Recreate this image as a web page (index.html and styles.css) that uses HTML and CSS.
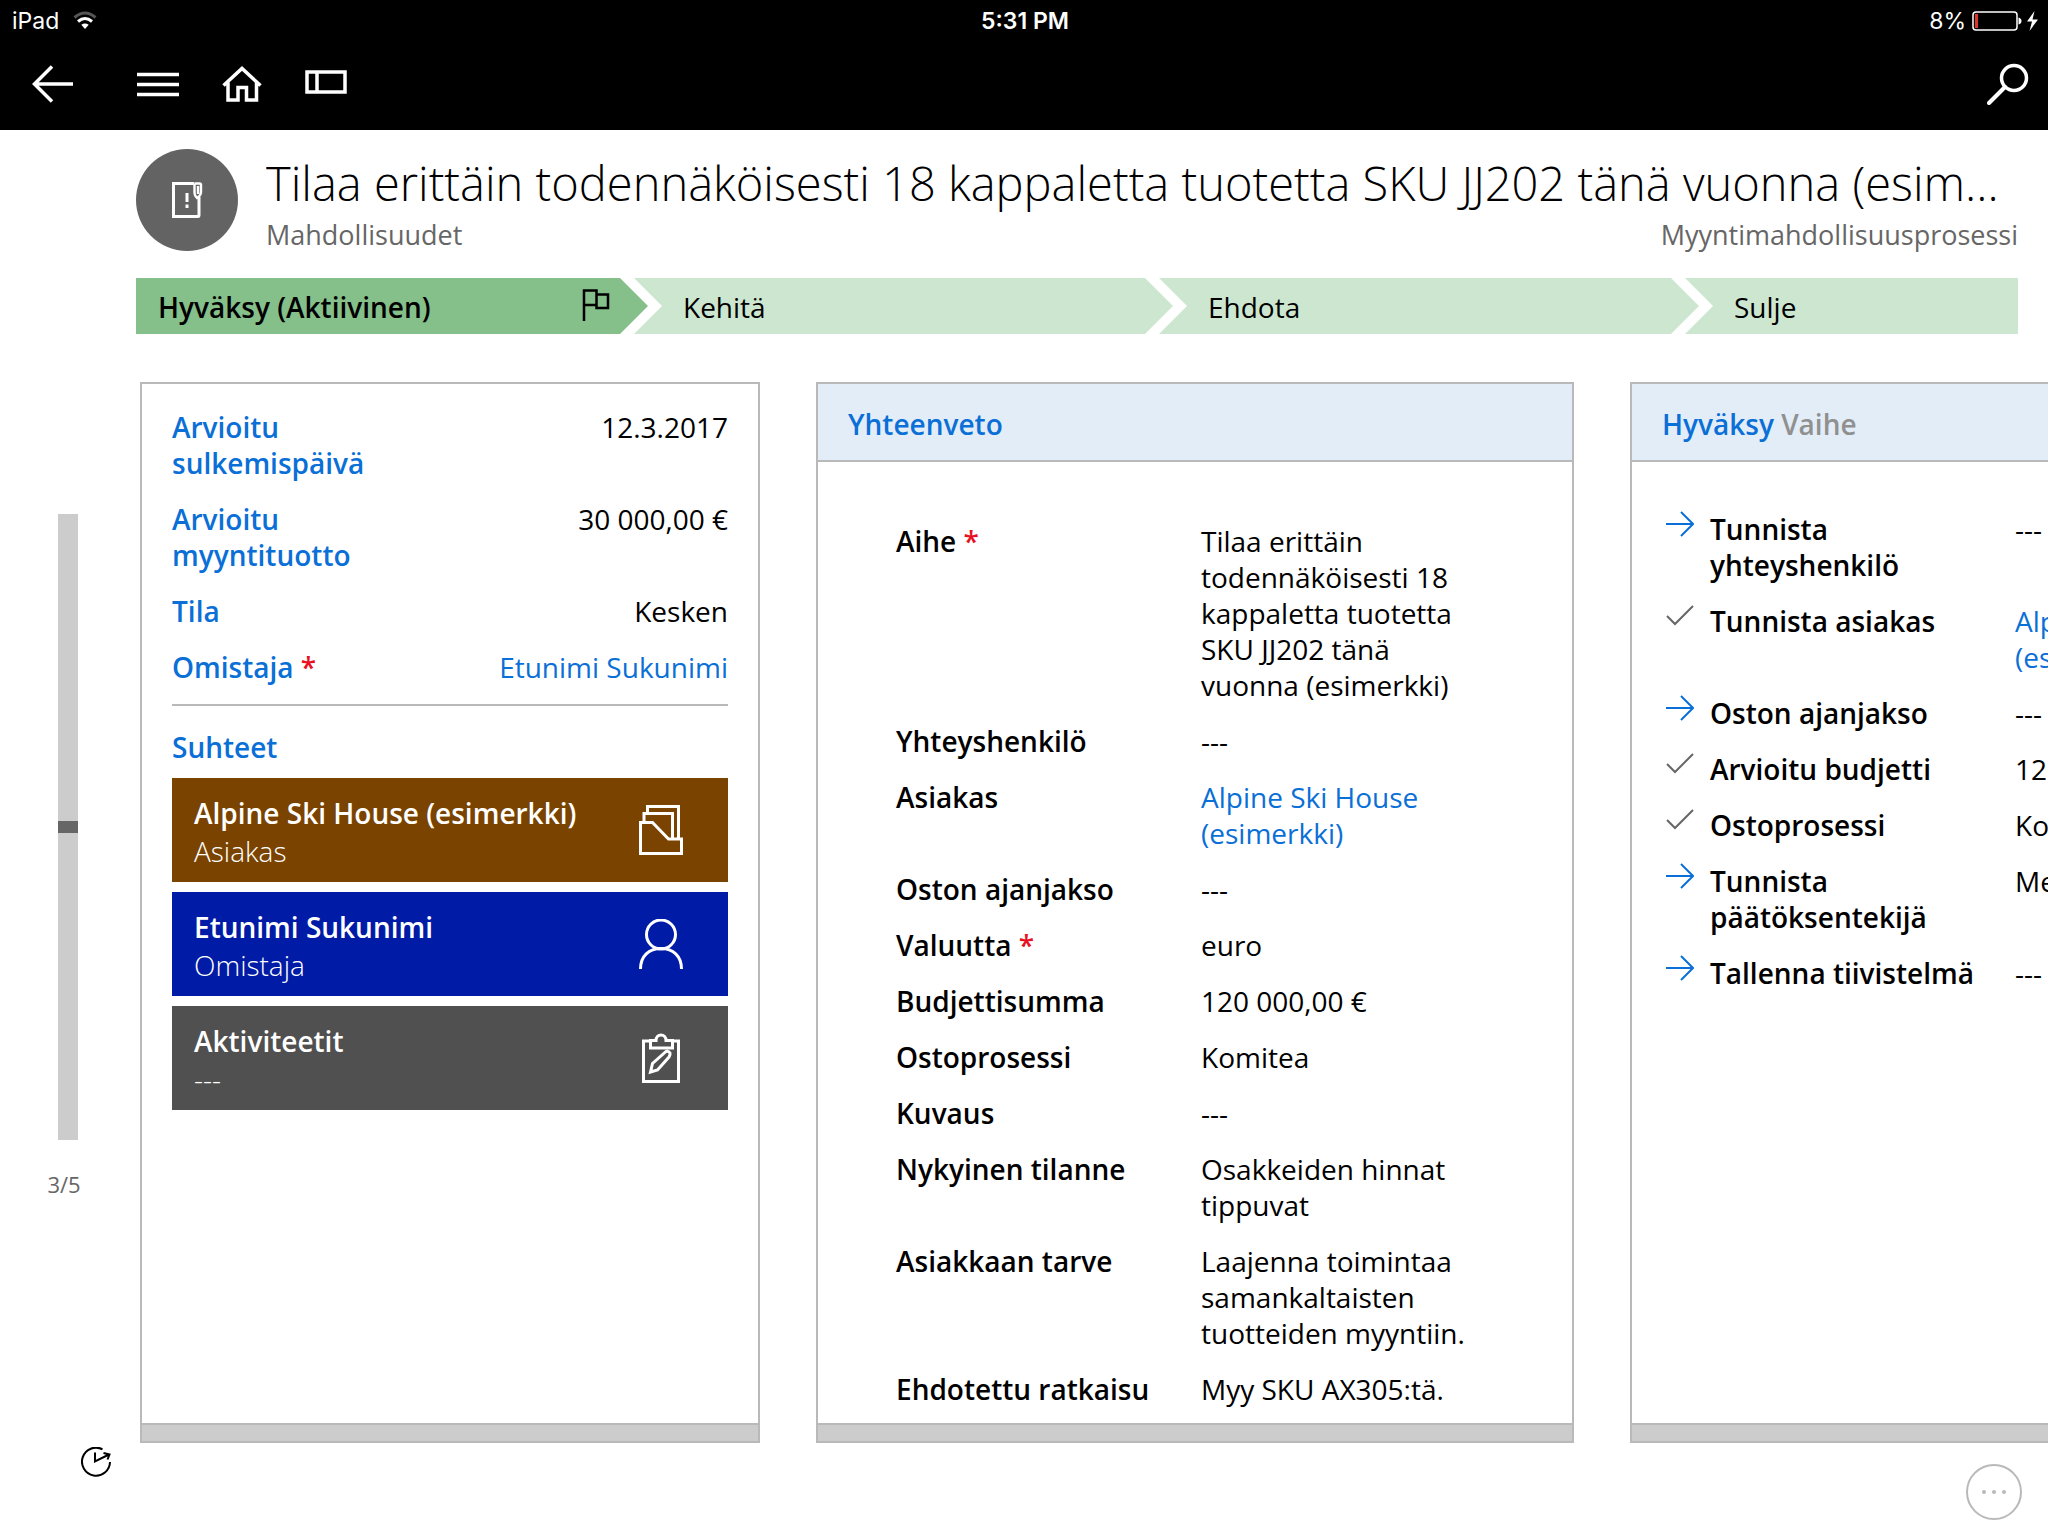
FILE: index.html
```html
<!DOCTYPE html>
<html lang="fi">
<head>
<meta charset="utf-8">
<meta name="viewport" content="width=device-width, initial-scale=1">
<title>Mahdollisuudet</title>
<link rel="stylesheet" href="styles.css">
</head>
<body>
<header class="top">
  <div class="status">
    <div class="status-left">
      <span>iPad</span>
      <svg width="24" height="20" viewBox="0 0 24 20" fill="none" stroke="#fff" aria-hidden="true">
        <path d="M1.500 6.500 Q12 -2.500 22.500 6.500" stroke="#555" stroke-width="3"/>
        <path d="M5 10.500 Q12 4.500 19 10.500" stroke-width="3"/>
        <path d="M12 18 L8.300 13.800 Q12 11 15.700 13.800 Z" fill="#fff" stroke="none"/>
      </svg>
    </div>
    <time class="clock">5:31 PM</time>
    <div class="status-right">
      <span>8%</span>
      <svg width="66" height="20" viewBox="0 0 66 20" aria-hidden="true">
        <rect x="1" y="1" width="44" height="18" rx="3" fill="none" stroke="#fff" stroke-width="1.500"/>
        <path d="M3 3 h3 v14 h-3 z" fill="#e0342b"/>
        <path d="M46.500 6.500 q3 1 3 3.500 t-3 3.500 z" fill="#fff"/>
        <path d="M62.500 0 L55 10.500 H60 L57.500 20 L66 8.500 H60.500 Z" fill="#fff"/>
      </svg>
    </div>
  </div>
  <nav class="toolbar">
    <button class="tool back" aria-label="Takaisin">
      <svg width="42" height="38" viewBox="0 0 42 38"><path d="M20 1.500 L2.500 19 L20 36.500 M2.500 19 H41"/></svg>
    </button>
    <button class="tool" aria-label="Valikko">
      <svg width="42" height="38" viewBox="0 0 42 38"><path d="M0 9.500 H42 M0 19.500 H42 M0 29.500 H42"/></svg>
    </button>
    <button class="tool" aria-label="Aloitus">
      <svg width="42" height="38" viewBox="0 0 42 38"><path d="M2.500 20.500 L21 3.500 L39.500 20.500 M7 17.500 V35 H17 V22.500 H25.500 V35 H35.500 V17.500"/></svg>
    </button>
    <button class="tool" aria-label="Paneeli">
      <svg width="42" height="38" viewBox="0 0 42 38"><path d="M2 7 H40 V27 H2 Z M12 7 V27"/></svg>
    </button>
    <button class="tool search" aria-label="Haku">
      <svg width="42" height="42" viewBox="0 0 42 42"><circle cx="27" cy="15" r="12.500"/><path d="M18 24 L2 40" stroke-linecap="round" stroke-width="4"/></svg>
    </button>
  </nav>
</header>

<main class="page">
  <section class="record">
    <div class="avatar">
      <svg width="32" height="38" viewBox="0 0 32 38" fill="none" stroke="#fff" stroke-width="3" aria-hidden="true">
        <path d="M23 2.500 H2.500 V35.500 H27 Q28 35.500 28 34 V16"/>
        <path d="M23.500 2.500 V12 Q23.500 14.500 26 17 Q30 14.500 30 11 V4 Q30 2.500 28.500 2.500 H23.500 M27 5 V13" stroke-width="2.400"/>
        <path d="M16 12 V21 M16 23.500 V27" stroke-width="3"/>
      </svg>
    </div>
    <div class="record-text">
      <h1 class="record-title">Tilaa erittäin todennäköisesti 18 kappaletta tuotetta SKU JJ202 tänä vuonna (esim…</h1>
      <div class="record-sub"><span>Mahdollisuudet</span><span>Myyntimahdollisuusprosessi</span></div>
    </div>
  </section>

  <ol class="process">
    <li class="stage stage-first"><b>Hyväksy (Aktiivinen)</b>
      <svg width="28" height="32" viewBox="0 0 28 32" fill="none" stroke="#000" stroke-width="2.500" aria-hidden="true"><path d="M2 32 V1.500 H14.500 V16 H2 M14.500 5.500 H26 V19 H14.500 V16"/></svg>
    </li>
    <li class="stage">Kehitä</li>
    <li class="stage">Ehdota</li>
    <li class="stage stage-last">Sulje</li>
  </ol>

  <div class="workspace">
    <aside class="rail">
      <div class="rail-track"><div class="rail-thumb"></div></div>
      <span class="rail-count">3/5</span>
    </aside>
    <div class="cards">
      <section class="card card-narrow">
        <div class="card-body">
          <dl class="facts">
            <div><dt>Arvioitu sulkemispäivä</dt><dd>12.3.2017</dd></div>
            <div><dt>Arvioitu myyntituotto</dt><dd>30 000,00 €</dd></div>
            <div><dt>Tila</dt><dd>Kesken</dd></div>
            <div><dt>Omistaja <span class="req">*</span></dt><dd><a href="#">Etunimi Sukunimi</a></dd></div>
          </dl>
          <h2 class="relations">Suhteet</h2>
          <div class="tiles">
            <a class="tile tile-brown" href="#">
              <span class="tile-text"><b>Alpine Ski House (esimerkki)</b><span>Asiakas</span></span>
              <svg width="44" height="50" viewBox="0 0 44 50"><path d="M1.500 17.500 H13.500 L29.500 34 H42.500 V48.500 H1.500 Z M5 17 V8.500 H33.500 V33 M8.500 8 V1.500 H39.500 V33"/></svg>
            </a>
            <a class="tile tile-blue" href="#">
              <span class="tile-text"><b>Etunimi Sukunimi</b><span>Omistaja</span></span>
              <svg width="44" height="50" viewBox="0 0 44 50"><circle cx="22" cy="15.500" r="14.500"/><path d="M1.500 50 C1.500 37 10 29.500 22 29.500 S42.500 37 42.500 50"/></svg>
            </a>
            <a class="tile tile-grey" href="#">
              <span class="tile-text"><b>Aktiviteetit</b><span>---</span></span>
              <svg width="44" height="50" viewBox="0 0 44 50"><path d="M11 8 H4.500 V48.500 H39.500 V8 H33 M11.500 7.500 H17 C17 0 27 0 27 7.500 H33.500 V15 H11.500 Z M11.500 39 L13.500 30.500 L27 18.500 Q29.500 17.500 31 20 Q31.500 22 30 24 L18.500 37 Z"/></svg>
            </a>
          </div>
        </div>
        <div class="card-foot"></div>
      </section>

      <section class="card">
        <h2 class="card-head">Yhteenveto</h2>
        <div class="card-body">
          <dl class="fields">
            <div><dt>Aihe <span class="req">*</span></dt><dd>Tilaa erittäin todennäköisesti 18 kappaletta tuotetta SKU JJ202 tänä vuonna (esimerkki)</dd></div>
            <div><dt>Yhteyshenkilö</dt><dd>---</dd></div>
            <div><dt>Asiakas</dt><dd><a href="#">Alpine Ski House (esimerkki)</a></dd></div>
            <div><dt>Oston ajanjakso</dt><dd>---</dd></div>
            <div><dt>Valuutta <span class="req">*</span></dt><dd>euro</dd></div>
            <div><dt>Budjettisumma</dt><dd>120 000,00 €</dd></div>
            <div><dt>Ostoprosessi</dt><dd>Komitea</dd></div>
            <div><dt>Kuvaus</dt><dd>---</dd></div>
            <div><dt>Nykyinen tilanne</dt><dd>Osakkeiden hinnat tippuvat</dd></div>
            <div><dt>Asiakkaan tarve</dt><dd>Laajenna toimintaa samankaltaisten tuotteiden myyntiin.</dd></div>
            <div><dt>Ehdotettu ratkaisu</dt><dd>Myy SKU AX305:tä.</dd></div>
          </dl>
        </div>
        <div class="card-foot"></div>
      </section>

      <section class="card">
        <h2 class="card-head">Hyväksy <span>Vaihe</span></h2>
        <div class="card-body">
          <dl class="steps">
            <div class="todo"><dt><svg width="28" height="26" viewBox="0 0 28 26"><path d="M0 13 H27 M15 1 L27 13 L15 25"/></svg>Tunnista yhteyshenkilö</dt><dd>---</dd></div>
            <div class="done"><dt><svg width="28" height="26" viewBox="0 0 28 26"><path d="M1 13 L9 21 L27 3"/></svg>Tunnista asiakas</dt><dd><a href="#">Alpine Ski House (esimerkki)</a></dd></div>
            <div class="todo"><dt><svg width="28" height="26" viewBox="0 0 28 26"><path d="M0 13 H27 M15 1 L27 13 L15 25"/></svg>Oston ajanjakso</dt><dd>---</dd></div>
            <div class="done"><dt><svg width="28" height="26" viewBox="0 0 28 26"><path d="M1 13 L9 21 L27 3"/></svg>Arvioitu budjetti</dt><dd>120 000,00 €</dd></div>
            <div class="done"><dt><svg width="28" height="26" viewBox="0 0 28 26"><path d="M1 13 L9 21 L27 3"/></svg>Ostoprosessi</dt><dd>Komitea</dd></div>
            <div class="todo"><dt><svg width="28" height="26" viewBox="0 0 28 26"><path d="M0 13 H27 M15 1 L27 13 L15 25"/></svg>Tunnista päätöksentekijä</dt><dd>Merkitse</dd></div>
            <div class="todo"><dt><svg width="28" height="26" viewBox="0 0 28 26"><path d="M0 13 H27 M15 1 L27 13 L15 25"/></svg>Tallenna tiivistelmä</dt><dd>---</dd></div>
          </dl>
        </div>
        <div class="card-foot"></div>
      </section>
    </div>
  </div>
</main>

<footer class="bottom">
  <button class="recent" aria-label="Viimeisimmät">
    <svg width="30" height="30" viewBox="0 0 30 30" fill="none" stroke="#000" stroke-width="2"><path d="M21.500 2.300 A14 14 0 1 0 29 15 M14 5.500 V14.500 L28 7.500 M22.500 6 L28.500 7.500 L26.500 12.500"/></svg>
  </button>
  <button class="more" aria-label="Lisää">
    <svg width="24" height="4" viewBox="0 0 24 4" fill="#b9b9b9"><circle cx="2" cy="2" r="2"/><circle cx="12" cy="2" r="2"/><circle cx="22" cy="2" r="2"/></svg>
  </button>
</footer>
</body>
</html>
```

FILE: styles.css
```css
* { box-sizing: border-box; }

body {
  margin: 0;
  min-height: 100vh;
  display: flex;
  flex-direction: column;
  background: #fff;
  color: #000;
  font: 400 28px/36px "Open Sans", "Noto Sans", sans-serif;
  overflow-x: hidden;
}

button {
  padding: 0;
  border: 0;
  background: none;
}

svg { display: block; flex: none; }
a { color: #0a6fd6; text-decoration: none; }
b { font-weight: 600; }
h1, h2, dl, dd, ol { margin: 0; padding: 0; font-weight: 400; }

/* Status bar and toolbar */
.top { background: #000; color: #fff; }

.status {
  display: grid;
  grid-template-columns: 1fr auto 1fr;
  align-items: center;
  height: 42px;
  padding: 0 10px 0 12px;
  font: 400 23px/28px Inter, sans-serif;
}
.status-left { display: flex; align-items: center; gap: 14px; }
.status-right { display: flex; align-items: center; justify-content: flex-end; gap: 6px; }
.clock { font-weight: 600; }

.toolbar {
  display: flex;
  align-items: center;
  gap: 42px;
  height: 88px;
  padding: 0 19px 4px 32px;
}
.tool svg { fill: none; stroke: #fff; stroke-width: 3.5px; }
.back { margin-right: 21px; }
.search { margin-left: auto; }

/* Record header */
.page { flex: 1; display: flex; flex-direction: column; }

.record {
  display: flex;
  gap: 28px;
  padding: 19px 20px 0 136px;
}
.avatar {
  flex: none;
  width: 102px;
  height: 102px;
  border-radius: 50%;
  background: #636363;
  display: grid;
  place-items: center;
}
.record-text { flex: 1; min-width: 0; }
.record-title {
  font-weight: 300;
  font-size: 47px;
  line-height: 68px;
  overflow: hidden;
  white-space: nowrap;
  text-overflow: ellipsis;
}
.record-sub {
  display: flex;
  justify-content: space-between;
  padding-right: 10px;
  color: #666;
  font-size: 27px;
}

/* Process stages */
.process {
  display: grid;
  grid-template-columns: 512fr 525fr 526fr 319fr;
  margin: 25px 30px 0 136px;
  list-style: none;
}
.stage {
  margin-left: -14px;
  padding: 11px 38px 9px 49px;
  background: #cce6cf;
  clip-path: polygon(0 0, calc(100% - 28px) 0, 100% 50%, calc(100% - 28px) 100%, 0 100%, 28px 50%);
}
.stage-first {
  display: flex;
  justify-content: space-between;
  margin-left: 0;
  padding-left: 22px;
  background: #85bf8a;
  clip-path: polygon(0 0, calc(100% - 28px) 0, 100% 50%, calc(100% - 28px) 100%, 0 100%);
}
.stage-last {
  clip-path: polygon(0 0, 100% 0, 100% 100%, 0 100%, 28px 50%);
}

/* Workspace */
.workspace {
  flex: 1;
  display: grid;
  grid-template-columns: 136px 1fr;
  margin-top: 48px;
}
.rail {
  display: flex;
  flex-direction: column;
  align-items: center;
  padding-top: 132px;
}
.rail-track {
  width: 20px;
  height: 626px;
  background: #ccc;
  display: flex;
  align-items: center;
}
.rail-thumb { width: 20px; height: 12px; background: #666; }
.rail-count {
  margin-top: 26px;
  padding-right: 8px;
  color: #666;
  font-size: 22px;
}

.cards {
  display: flex;
  gap: 56px;
  min-width: 0;
  padding-left: 4px;
  overflow-x: auto;
  scrollbar-width: none;
}
.card {
  flex: none;
  width: 758px;
  display: flex;
  flex-direction: column;
  border: 2px solid #b9b9b9;
}
.card-narrow { width: 620px; }
.card-head {
  padding: 22px 30px 18px;
  border-bottom: 2px solid #b9b9b9;
  background: #e3edf7;
  color: #0a6fd6;
  font-size: 28px;
  font-weight: 600;
}
.card-head span { color: #909090; }
.card-body { flex: 1; }
.card-foot { height: 18px; border-top: 2px solid #b9b9b9; background: #ccc; }

dt { font-weight: 600; }
.req { color: #e81123; }

/* Key facts */
.facts {
  display: grid;
  gap: 20px;
  margin: 25px 30px 0;
  padding-bottom: 19px;
  border-bottom: 2px solid #b9b9b9;
}
.facts > div { display: grid; grid-template-columns: 210px 1fr; }
.facts dt { color: #0a6fd6; }
.facts dd { text-align: right; }

.relations {
  margin: 23px 30px 13px;
  color: #0a6fd6;
  font-size: 28px;
  font-weight: 600;
}
.tiles { display: grid; gap: 10px; margin: 0 30px; }
.tile {
  display: flex;
  align-items: center;
  justify-content: space-between;
  height: 104px;
  padding: 0 45px 0 22px;
  color: #fff;
}
.tile svg { fill: none; stroke: #fff; stroke-width: 3px; }
.tile-text { display: grid; padding-top: 4px; line-height: 38px; }
.tile-text span { font-weight: 300; }
.tile-brown { background: #7a4300; }
.tile-blue { background: #001ba6; }
.tile-grey { background: #505050; }

/* Summary fields */
.fields { display: grid; gap: 20px; padding: 61px 78px 0; }
.fields > div { display: grid; grid-template-columns: 305px 1fr; }

/* Stage steps */
.steps { display: grid; gap: 20px; padding: 49px 30px 0 34px; }
.steps > div { display: grid; grid-template-columns: 349px 1fr; }
.steps dt { display: flex; gap: 16px; padding-right: 28px; }
.steps svg { fill: none; stroke-width: 2px; }
.todo svg { stroke: #0a6fd6; }
.done svg { stroke: #666; }

/* Bottom bar */
.bottom {
  display: flex;
  justify-content: space-between;
  align-items: flex-start;
  padding: 4px 26px 16px 81px;
}
.more {
  width: 56px;
  height: 56px;
  margin-top: 17px;
  border: 2px solid #b9b9b9;
  border-radius: 50%;
  display: grid;
  place-items: center;
}
```
